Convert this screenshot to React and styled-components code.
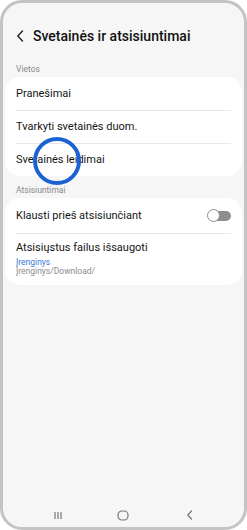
import React from "react";
import styled, { createGlobalStyle } from "styled-components";

const Global = createGlobalStyle`
  html, body { margin: 0; padding: 0; background: #ffffff; }
  * { box-sizing: border-box; }
`;

const Phone = styled.div`
  position: relative;
  width: 247px;
  height: 530px;
  border: 3px solid #c4c4c4;
  border-radius: 22px;
  background: #f6f6f6;
  overflow: hidden;
  display: flex;
  flex-direction: column;
  font-family: Roboto, "Noto Sans", Arial, sans-serif;
  color: #111111;
`;

const Header = styled.div`
  height: 52px;
  padding: 14px 0 0 13px;
  display: flex;
  align-items: center;
  gap: 8px;
`;

const Title = styled.div`
  font-size: 14px;
  font-weight: 500;
  color: #111;
  letter-spacing: 0;
`;

const SectionLabel = styled.div`
  padding: 9px 0 3px 13px;
  font-size: 8.5px;
  line-height: 10px;
  color: #8a8a8a;
`;

const Card = styled.div`
  margin: 0 2px 0 2px;
  background: #ffffff;
  border-radius: 15px;
  padding: 0 11px;
`;

const Row = styled.div`
  height: ${(p) => p.$h}px;
  display: flex;
  align-items: ${(p) => (p.$stack ? "flex-start" : "center")};
  flex-direction: ${(p) => (p.$stack ? "column" : "row")};
  justify-content: ${(p) => (p.$stack ? "flex-start" : "space-between")};
  padding-top: ${(p) => (p.$stack ? 7 : 0)}px;
  border-top: ${(p) => (p.$first ? "none" : "1px solid #e8e8e8")};
`;

const RowText = styled.div`
  font-size: 11px;
  line-height: 14px;
  color: #151515;
`;

const SubBlue = styled.div`
  font-size: 8.5px;
  line-height: 9px;
  margin-top: 3px;
  color: #3b7bd6;
`;

const SubGray = styled.div`
  font-size: 8.5px;
  line-height: 9px;
  color: #8c8c8c;
`;

const Toggle = styled.div`
  position: relative;
  width: 23px;
  height: 10px;
  border-radius: 5px;
  background: #8e8e8e;
`;

const Thumb = styled.div`
  position: absolute;
  left: -1px;
  top: -1.5px;
  width: 13px;
  height: 13px;
  border-radius: 50%;
  background: #ffffff;
  border: 1.5px solid #8e8e8e;
`;

const Spacer = styled.div`
  flex: 1;
`;

const NavBar = styled.div`
  height: 24px;
  display: grid;
  grid-template-columns: 1fr 1fr 1fr;
  align-items: center;
  justify-items: center;
  padding: 0 22px 0 22px;
`;

const Ring = styled.div`
  position: absolute;
  left: 30px;
  top: 134px;
  width: 48px;
  height: 48px;
  border-radius: 50%;
  border: 4px solid #1b62d2;
  pointer-events: none;
`;

const Back = () => (
  <svg width="9" height="12" viewBox="0 0 9 12">
    <path d="M6.5 1 L1.8 6 L6.5 11" fill="none" stroke="#222" strokeWidth="1.4" strokeLinecap="round" strokeLinejoin="round" />
  </svg>
);

const RecentsIcon = () => (
  <svg width="10" height="9" viewBox="0 0 10 9">
    <g stroke="#777" strokeWidth="1.2">
      <line x1="2" y1="1" x2="2" y2="8" />
      <line x1="5" y1="1" x2="5" y2="8" />
      <line x1="8" y1="1" x2="8" y2="8" />
    </g>
  </svg>
);

const HomeIcon = () => (
  <svg width="12" height="11" viewBox="0 0 12 11">
    <rect x="1" y="1" width="10" height="9" rx="4" fill="none" stroke="#777" strokeWidth="1.2" />
  </svg>
);

const BackNavIcon = () => (
  <svg width="7" height="10" viewBox="0 0 7 10">
    <path d="M5.5 1 L1.8 5 L5.5 9" fill="none" stroke="#777" strokeWidth="1.2" strokeLinecap="round" strokeLinejoin="round" />
  </svg>
);

export default function App() {
  return (
    <>
      <Global />
      <Phone>
        <Header>
          <Back />
          <Title>Svetainės ir atsisiuntimai</Title>
        </Header>
        <SectionLabel>Vietos</SectionLabel>
        <Card>
          <Row $h={33} $first>
            <RowText>Pranešimai</RowText>
          </Row>
          <Row $h={33}>
            <RowText>Tvarkyti svetainės duom.</RowText>
          </Row>
          <Row $h={33}>
            <RowText>Svetainės leidimai</RowText>
          </Row>
        </Card>
        <SectionLabel>Atsisiuntimai</SectionLabel>
        <Card>
          <Row $h={35} $first>
            <RowText>Klausti prieš atsisiunčiant</RowText>
            <Toggle>
              <Thumb />
            </Toggle>
          </Row>
          <Row $h={52} $stack>
            <RowText>Atsisiųstus failus išsaugoti</RowText>
            <SubBlue>Įrenginys</SubBlue>
            <SubGray>Įrenginys/Download/</SubGray>
          </Row>
        </Card>
        <Spacer />
        <NavBar>
          <RecentsIcon />
          <HomeIcon />
          <BackNavIcon />
        </NavBar>
        <Ring />
      </Phone>
    </>
  );
}
